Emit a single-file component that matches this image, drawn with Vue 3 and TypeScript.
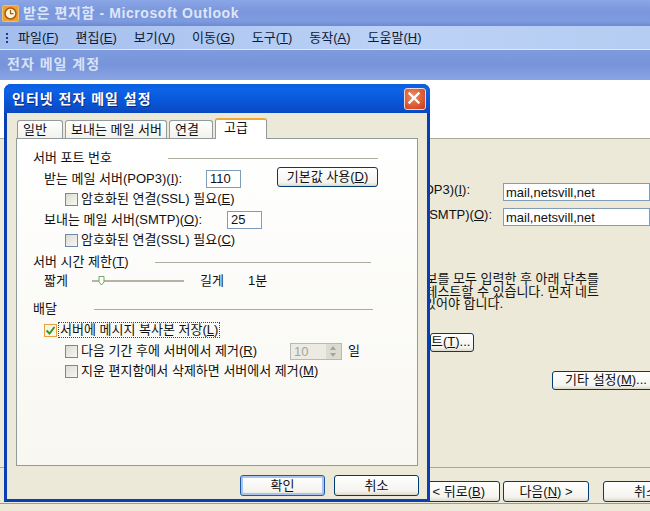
<script setup lang="ts">
const menus = [
  { label: '파일', key: 'F' },
  { label: '편집', key: 'E' },
  { label: '보기', key: 'V' },
  { label: '이동', key: 'G' },
  { label: '도구', key: 'T' },
  { label: '동작', key: 'A' },
  { label: '도움말', key: 'H' },
]
const tabs = ['일반', '보내는 메일 서버', '연결', '고급']
</script>

<template>
  <div class="screen">
    <header class="app-title">
      <svg class="app-icon" width="17" height="17" viewBox="0 0 17 17">
        <rect x="0.5" y="0.5" width="16" height="16" rx="1" fill="#f0a030" stroke="#e8c070" />
        <circle cx="8.5" cy="8.5" r="5.5" fill="#fff4d8" stroke="#a85a10" stroke-width="1.5" />
        <path d="M8.5 5v3.7h3" fill="none" stroke="#a85a10" stroke-width="1.2" />
      </svg>
      <span>받은 편지함 - Microsoft Outlook</span>
    </header>
    <nav class="menubar">
      <span class="grip"><i></i><i></i><i></i></span>
      <span v-for="m in menus" :key="m.key" class="menu">{{ m.label }}(<u>{{ m.key }}</u>)</span>
    </nav>
    <div class="wizard-title">전자 메일 계정</div>
    <div class="wizard-head"></div>
    <section class="wizard-body">
      <div class="field first">
        <label class="field-label">OP3)(<u>I</u>):</label>
        <span class="wide-input">mail,netsvill,net</span>
      </div>
      <div class="field second">
        <label class="field-label smtp">SMTP)(<u>O</u>):</label>
        <span class="wide-input">mail,netsvill,net</span>
      </div>
      <div class="note">
        <div>보를 모두 입력한 후 아래 단추를</div>
        <div>테스트할 수 있습니다. 먼저 네트</div>
        <div class="note-last">있어야 합니다.</div>
      </div>
      <div class="test-row"><button class="xp-btn test">트(<u>T</u>)...</button></div>
      <div class="more-row"><button class="xp-btn more">기타 설정(<u>M</u>)...</button></div>
    </section>
    <footer class="wizard-foot">
      <button class="xp-btn back">&lt; 뒤로(<u>B</u>)</button>
      <button class="xp-btn next">다음(<u>N</u>) &gt;</button>
      <button class="xp-btn cancel">취소</button>
    </footer>
    <div class="bottom-edge"></div>

    <div class="dialog">
      <div class="dialog-title">
        <span>인터넷 전자 메일 설정</span>
        <span class="close">
          <svg width="18" height="18" viewBox="0 0 20 20">
            <path d="M5 5l10 10M15 5L5 15" stroke="#fff" stroke-width="2.6" stroke-linecap="square" />
          </svg>
        </span>
      </div>
      <div class="dialog-body">
        <div class="tabs">
          <span
            v-for="(t, i) in tabs"
            :key="t"
            class="tab"
            :class="['tab' + i, { active: i === 3 }]"
          >{{ t }}</span>
        </div>
        <div class="panel">
          <div class="group-head port"><span>서버 포트 번호</span><i></i></div>
          <div class="row indent1 nudge">
            <span class="port-label">받는 메일 서버(POP3)(<u>I</u>):</span>
            <span class="num-input">110</span>
            <button class="xp-btn defaults">기본값 사용(<u>D</u>)</button>
          </div>
          <div class="row indent2">
            <span class="check"></span>암호화된 연결(SSL) 필요(<u>E</u>)
          </div>
          <div class="row indent1 nudge">
            <span class="port-label smtp-label">보내는 메일 서버(SMTP)(<u>O</u>):</span>
            <span class="num-input">25</span>
          </div>
          <div class="row indent2">
            <span class="check"></span>암호화된 연결(SSL) 필요(<u>C</u>)
          </div>
          <div class="group-head time"><span>서버 시간 제한(<u>T</u>)</span><i></i></div>
          <div class="row indent1 timeout">
            <span class="short">짧게</span>
            <span class="slider">
              <svg class="thumb" width="7" height="10" viewBox="0 0 7 10">
                <path d="M1 .5h5v5.5L3.5 9 1 6z" fill="#fff" stroke="#68ad58" />
              </svg>
            </span>
            <span class="long">길게</span>
            <span>1분</span>
          </div>
          <div class="group-head delivery"><span>배달</span><i></i></div>
          <div class="row keep">
            <span class="check checked">
              <svg width="11" height="11" viewBox="0 0 11 11">
                <path d="M1.5 5.5l3 3 5-6.5" fill="none" stroke="#2e9a28" stroke-width="2" />
              </svg>
            </span>
            <span class="focus">서버에 메시지 복사본 저장(<u>L</u>)</span>
          </div>
          <div class="row indent2 sub">
            <span class="check"></span>
            <span class="remove-label">다음 기간 후에 서버에서 제거(<u>R</u>)</span>
            <span class="spin">
              <span>10</span>
              <span class="spin-btns"><em></em><em class="down"></em></span>
            </span>
            <span>일</span>
          </div>
          <div class="row indent2">
            <span class="check"></span>지운 편지함에서 삭제하면 서버에서 제거(<u>M</u>)
          </div>
        </div>
        <div class="dialog-actions">
          <button class="xp-btn action default">확인</button>
          <button class="xp-btn action">취소</button>
        </div>
      </div>
    </div>
  </div>
</template>

<style>
html, body { margin: 0; background: #ece9d8; }
</style>

<style scoped>
.screen {
  position: relative;
  width: 650px;
  height: 511px;
  overflow: hidden;
  background: #ece9d8;
  color: #111;
  font: 13px/16px "Liberation Sans", "Noto Sans CJK KR", sans-serif;
}
u { text-underline-offset: 1px; }
.app-title {
  height: 26px;
  box-sizing: border-box;
  display: flex;
  align-items: center;
  gap: 4px;
  padding-left: 2px;
  color: #dfe6f8;
  font-size: 14px;
  font-weight: 700;
  letter-spacing: 0.6px;
  background: linear-gradient(#8ba6e6 0, #7a97dc 45%, #7f9be0 80%, #6d8ad2 100%);
}
.app-icon { flex: none; }
.menubar {
  height: 24px;
  box-sizing: border-box;
  display: flex;
  align-items: center;
  gap: 17px;
  padding-left: 6px;
  background: linear-gradient(90deg, #a3bdec, #bcd2f6 60%, #b6cdf3);
  border-bottom: 1px solid #dfe8f8;
  color: #0d1a35;
}
.grip { display: flex; flex-direction: column; gap: 2px; margin-right: -7px; }
.grip i { width: 2px; height: 2px; background: #1f3c80; }
.menu { white-space: nowrap; }
.wizard-title {
  height: 30px;
  box-sizing: border-box;
  padding: 6px 0 0 7px;
  color: #d8e2f6;
  font-size: 14px;
  font-weight: 700;
  letter-spacing: 1px;
  background: linear-gradient(#7e9bdf, #7794da 50%, #8aa5e4);
}
.wizard-head {
  height: 58px;
  background: #fff;
  border-bottom: 1px solid #aca899;
}
.wizard-body {
  height: 329px;
  box-sizing: border-box;
  padding-top: 44px;
  border-bottom: 1px solid #aca899;
}
.field { display: flex; align-items: center; height: 18px; white-space: nowrap; }
.field.second { margin-top: 7px; }
.field-label { width: 470px; text-align: right; margin-right: 33px; padding-bottom: 4px; flex: none; }
.field-label.smtp { width: 492px; margin-right: 11px; }
.wide-input {
  flex: 1;
  height: 18px;
  box-sizing: border-box;
  border: 1px solid #7f9db9;
  background: #fff;
  padding-left: 2px;
  line-height: 17px;
  white-space: nowrap;
}
.note {
  width: 599px;
  margin-top: 47px;
  line-height: 12.5px;
  text-align: right;
  white-space: nowrap;
}
.note-last { padding-right: 96px; }
.test-row { margin-top: 22px; display: flex; justify-content: flex-end; padding-right: 176px; }
.more-row { margin-top: 19px; display: flex; justify-content: flex-end; margin-right: -10px; }
.xp-btn {
  box-sizing: border-box;
  margin: 0;
  padding: 0;
  font: inherit;
  color: #111;
  white-space: nowrap;
  border: 1px solid #003c74;
  border-radius: 3px;
  background: linear-gradient(#fff, #f4f3ee 80%, #dcd8c8);
}
.test { width: 44px; height: 19px; text-align: right; padding-right: 4px; }
.more { width: 108px; height: 19px; }
.wizard-foot {
  height: 35px;
  box-sizing: border-box;
  display: flex;
  padding: 13px 0 0 400px;
}
.wizard-foot .xp-btn { height: 21px; width: 86px; flex: none; }
.back { text-align: right; padding-right: 14px; width: 100px !important; }
.next { margin-left: 3px; }
.cancel { margin-left: 14px; }
.bottom-edge { height: 1px; background: #7f9be6; }

.dialog {
  position: absolute;
  left: 4px;
  top: 84px;
  width: 426px;
  height: 418px;
  box-sizing: border-box;
  display: flex;
  flex-direction: column;
  border-radius: 7px 7px 0 0;
  background: #0a3eb4;
}
.dialog-title {
  height: 29px;
  flex: none;
  box-sizing: border-box;
  display: flex;
  align-items: center;
  justify-content: space-between;
  padding: 0 4px 0 8px;
  color: #fff;
  font-size: 14px;
  font-weight: 700;
  letter-spacing: 1px;
  text-shadow: 1px 1px 0 #0a2a80;
  border-radius: 7px 7px 0 0;
  background: linear-gradient(#0a5fe0 0, #0e62e6 20%, #0856d8 60%, #0a49bf 100%);
}
.close {
  width: 20px;
  height: 20px;
  display: block;
  border: 1px solid #f0d8d0;
  border-radius: 3px;
  background: radial-gradient(circle at 40% 35%, #ec8a68, #d8502a 70%, #c03a1a);
}
.close svg { display: block; }
.dialog-body {
  flex: 1;
  margin: 0 3px 3px;
  display: flex;
  flex-direction: column;
  min-height: 0;
  background: #ece9d8;
}
.tabs {
  height: 25px;
  flex: none;
  position: relative;
  z-index: 1;
  display: flex;
  align-items: flex-end;
  padding-left: 10px;
  gap: 2px;
}
.tab {
  height: 18px;
  box-sizing: border-box;
  border: 1px solid #919b9c;
  border-bottom: 0;
  border-radius: 3px 3px 0 0;
  background: linear-gradient(#fff, #f2f1ea);
  padding-left: 5px;
  line-height: 17px;
  white-space: nowrap;
}
.tab0 { width: 46px; }
.tab1 { width: 102px; }
.tab2 { width: 44px; }
.tab3 { width: 52px; }
.tab.active {
  height: 21px;
  margin-bottom: -1px;
  border-top: 2px solid #f0a838;
  background: #fff;
  padding-left: 8px;
  line-height: 16px;
}
.panel {
  width: 402px;
  height: 328px;
  flex: none;
  box-sizing: border-box;
  margin-left: 9px;
  padding: 9px 0 0 16px;
  border: 1px solid #919b9c;
  background: linear-gradient(#fff, #f8f7f1);
}
.group-head { height: 20px; display: flex; align-items: center; white-space: nowrap; }
.group-head i { display: block; height: 1px; background: #aeac9e; }
.group-head.port i { margin-left: 56px; width: 210px; }
.group-head.time { margin-top: 2px; }
.group-head.time i { margin-left: 26px; width: 216px; }
.group-head.delivery { margin-top: 8px; }
.group-head.delivery i { margin-left: 37px; width: 279px; }
.row { display: flex; align-items: center; height: 20px; white-space: nowrap; position: relative; }
.nudge { margin-top: 1px; }
.indent1 { padding-left: 11px; }
.indent2 { padding-left: 32px; }
.port-label { width: 162px; flex: none; }
.smtp-label { width: 183px; }
.num-input {
  width: 35px;
  height: 18px;
  box-sizing: border-box;
  border: 1px solid #7f9db9;
  background: #fff;
  padding-left: 3px;
  line-height: 16px;
  flex: none;
}
.defaults { width: 101px; height: 20px; margin: -5px 0 0 36px; flex: none; }
.check {
  width: 13px;
  height: 13px;
  box-sizing: border-box;
  border: 1px solid #6f8aa8;
  background: linear-gradient(135deg, #dcdcd2, #f8f8f4);
  margin-right: 3px;
  flex: none;
}
.timeout { margin-top: -1px; }
.short { width: 48px; }
.slider {
  position: relative;
  width: 92px;
  height: 2px;
  background: #b5b3a6;
  margin-right: 16px;
  flex: none;
}
.thumb { position: absolute; left: 6px; top: -4px; display: block; }
.long { width: 48px; }
.keep { padding-left: 11px; margin-top: 1px; }
.check.checked {
  display: flex;
  align-items: center;
  justify-content: center;
  border-color: #e8a040;
  background: #f8f6ea;
  margin-right: 2px;
}
.focus { outline: 1px dotted #444; line-height: 14px; padding: 0 1px; }
.sub { margin-top: 1px; }
.remove-label { width: 209px; flex: none; }
.spin {
  width: 52px;
  height: 17px;
  box-sizing: border-box;
  border: 1px solid #b4b9bc;
  background: #ebebe4;
  color: #a5a599;
  display: flex;
  justify-content: space-between;
  padding-left: 3px;
  margin-right: 6px;
  line-height: 15px;
  flex: none;
}
.spin-btns { width: 15px; display: flex; flex-direction: column; background: #dcdbd0; }
.spin-btns em { flex: 1; position: relative; }
.spin-btns em::after {
  content: "";
  position: absolute;
  left: 4px;
  top: 2px;
  border: 3px solid transparent;
  border-top: 0;
  border-bottom: 4px solid #a5a599;
}
.spin-btns em.down::after {
  border-bottom: 0;
  border-top: 4px solid #a5a599;
}
.dialog-actions {
  display: flex;
  justify-content: flex-end;
  gap: 9px;
  padding: 9px 8px 0 0;
}
.action { width: 85px; height: 21px; }
.action.default { border-color: #1c5aa8; box-shadow: inset 0 0 0 2px #a9c4ee; }
</style>
